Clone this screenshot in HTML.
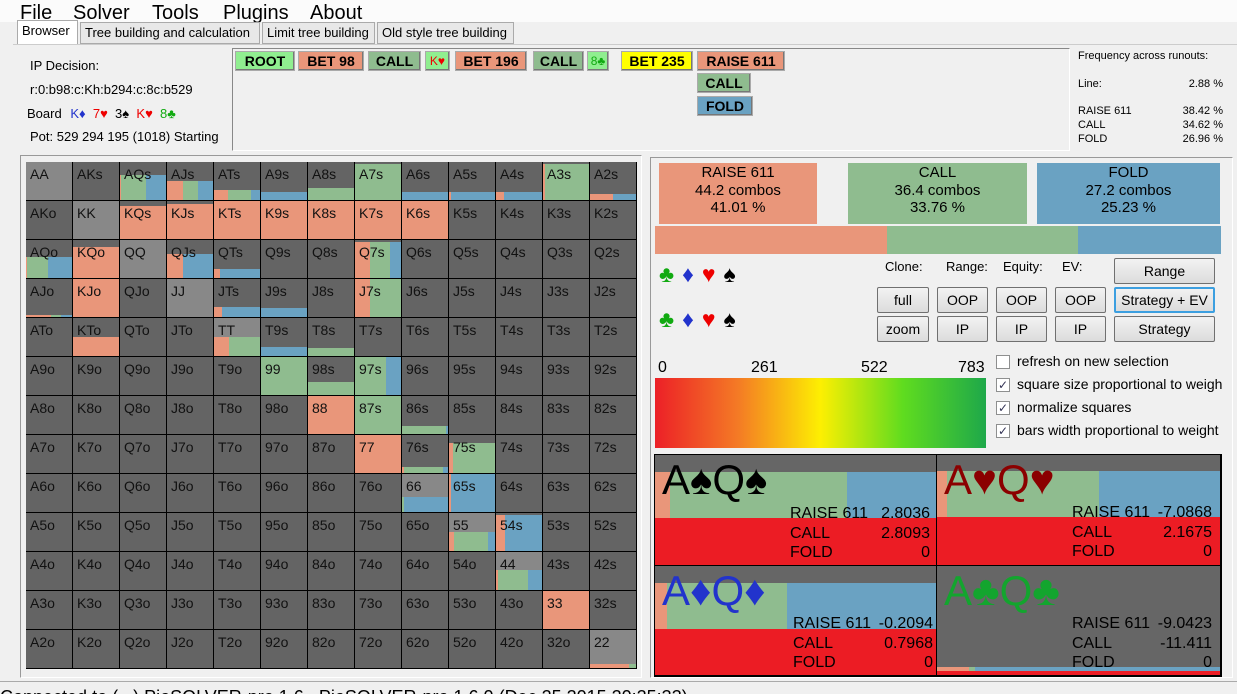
<!DOCTYPE html>
<html><head><meta charset="utf-8">
<style>
*{margin:0;padding:0;box-sizing:border-box}
body{width:1237px;height:694px;overflow:hidden;background:#f0f0f0;font-family:"Liberation Sans","DejaVu Sans",sans-serif;position:relative;color:#000}
.a{position:absolute}
.menu{left:0;top:0;width:1237px;height:22px;background:#fbfbfb}
.menu span{position:absolute;top:1px;font-size:20px;line-height:24px}
.tab{position:absolute;top:22px;height:22px;border:1px solid #aaa;background:#e8e8e8;font-size:13px;line-height:20px;padding:0 4px}
.tb{position:absolute;height:20px;border:1px solid #aaa;font-weight:bold;font-size:14px;line-height:18px;text-align:center;box-shadow:inset -1px -1px 0 #777}
.grid{left:26px;top:162px;width:611px;height:507px;background:#000;display:grid;grid-template-columns:repeat(13,46px);grid-template-rows:repeat(13,38px);gap:1px;padding:0 1px 1px 0}
.grid div{background:#646464;position:relative;font-size:14px;color:#111;padding:4px 0 0 4px;overflow:hidden}
.grid div.p{background:#888}
.grid i{position:absolute;left:0;right:0;bottom:0;display:flex}
.grid b{display:block;height:100%}
.grid span{position:relative;z-index:1}
.r{background:#e9967a}.g{background:#8fbc8f}.u{background:#6aa2c2}
.btn{position:absolute;height:26px;border:1px solid #707070;border-radius:2px;background:linear-gradient(#f2f2f2,#dcdcdc);font-size:14px;text-align:center;line-height:24px}
.cb{position:absolute;left:996px;width:14px;height:14px;border:1px solid #8e8f8f;background:#fff;font-size:12px;line-height:12px;color:#335;text-align:center}
.cl{position:absolute;left:1017px;font-size:14px;white-space:nowrap}
.q{position:absolute;overflow:hidden;background:#666}
.q .c{position:absolute;left:7px;font-size:42px;line-height:44px}
.q .t{position:absolute;font-size:16px;line-height:19.5px;width:140px}
.q .t div{display:flex;justify-content:space-between}
</style></head><body>
<div class="a menu"><span style="left:20px">File</span><span style="left:73px">Solver</span><span style="left:152px">Tools</span><span style="left:223px">Plugins</span><span style="left:310px">About</span></div>
<div class="tab" style="left:17px;top:20px;height:25px;width:61px;background:#fff;border-bottom:none">Browser</div>
<div class="tab" style="left:80px;width:180px">Tree building and calculation</div>
<div class="tab" style="left:262px;width:113px">Limit tree building</div>
<div class="tab" style="left:377px;width:137px">Old style tree building</div>
<div class="a" style="left:13px;top:44px;width:1224px;height:1px;background:#ccc"></div>

<div class="a" style="left:30px;top:58px;font-size:13px">IP Decision:</div>
<div class="a" style="left:30px;top:82px;font-size:13px">r:0:b98:c:Kh:b294:c:8c:b529</div>
<div class="a" style="left:27px;top:106px;font-size:13px">Board <span style="color:#2233cc;margin-left:5px">K♦</span> <span style="color:#e00">&nbsp;7♥</span> &nbsp;3♠ <span style="color:#e00">&nbsp;K♥</span> <span style="color:#1a1">&nbsp;8♣</span></div>
<div class="a" style="left:30px;top:129px;font-size:13px;white-space:nowrap;width:198px;overflow:hidden">Pot: 529 294 195 (1018) Starting</div>

<div class="a" style="left:232px;top:48px;width:838px;height:103px;border:1px solid #888;border-right-color:#fff;border-bottom-color:#fff;background:#f0f0f0"></div>
<div class="tb" style="left:235px;top:51px;width:60px;background:#90ee90">ROOT</div>
<div class="tb" style="left:298px;top:51px;width:66px;background:#e9967a">BET 98</div>
<div class="tb" style="left:368px;top:51px;width:53px;background:#8fbc8f">CALL</div>
<div class="tb" style="left:425px;top:51px;width:25px;background:#90ee90;font-weight:normal;font-size:12px;color:#e00">K♥</div>
<div class="tb" style="left:455px;top:51px;width:72px;background:#e9967a">BET 196</div>
<div class="tb" style="left:533px;top:51px;width:51px;background:#8fbc8f">CALL</div>
<div class="tb" style="left:587px;top:51px;width:22px;background:#90ee90;font-weight:normal;font-size:12px;color:#1a1">8♣</div>
<div class="tb" style="left:621px;top:51px;width:72px;background:#ffff00">BET 235</div>
<div class="tb" style="left:697px;top:51px;width:88px;background:#e9967a">RAISE 611</div>
<div class="tb" style="left:697px;top:73px;width:54px;background:#8fbc8f">CALL</div>
<div class="tb" style="left:697px;top:96px;width:56px;background:#6aa2c2">FOLD</div>

<div class="a" style="left:1078px;top:50px;font-size:11px">Frequency across runouts:</div>
<div class="a" style="left:1078px;top:78px;font-size:11px">Line:</div><div class="a" style="left:1160px;width:63px;text-align:right;top:78px;font-size:11px">2.88 %</div>
<div class="a" style="left:1078px;top:104px;font-size:11px;line-height:14px">RAISE 611<br>CALL<br>FOLD</div>
<div class="a" style="left:1160px;width:63px;text-align:right;top:104px;font-size:11px;line-height:14px">38.42 %<br>34.62 %<br>26.96 %</div>

<div class="a" style="left:20px;top:155px;width:622px;height:523px;border:1px solid #999;border-right-color:#fff;border-bottom-color:#fff"></div>
<div class="a grid">
<div class="p"><span>AA</span></div><div><span>AKs</span></div><div><span>AQs</span><i style="height:65%"><b class="r" style="flex:2"></b><b class="g" style="flex:55"></b><b class="u" style="flex:43"></b></i></div><div><span>AJs</span><i style="height:50%"><b class="r" style="flex:35"></b><b class="g" style="flex:33"></b><b class="u" style="flex:32"></b></i></div><div><span>ATs</span><i style="height:27%"><b class="r" style="flex:30"></b><b class="g" style="flex:50"></b><b class="u" style="flex:20"></b></i></div><div><span>A9s</span><i style="height:22%"><b class="u" style="flex:1"></b></i></div><div><span>A8s</span><i style="height:31%"><b class="g" style="flex:1"></b></i></div><div><span>A7s</span><i style="height:96%"><b class="g" style="flex:1"></b></i></div><div><span>A6s</span><i style="height:22%"><b class="u" style="flex:1"></b></i></div><div><span>A5s</span><i style="height:22%"><b class="r" style="flex:5"></b><b class="u" style="flex:95"></b></i></div><div><span>A4s</span><i style="height:22%"><b class="r" style="flex:17"></b><b class="u" style="flex:83"></b></i></div><div><span>A3s</span><i style="height:96%"><b class="r" style="flex:4"></b><b class="g" style="flex:96"></b></i></div><div><span>A2s</span><i style="height:17%"><b class="r" style="flex:50"></b><b class="u" style="flex:50"></b></i></div>
<div><span>AKo</span></div><div class="p"><span>KK</span></div><div><span>KQs</span><i style="height:87%"><b class="r" style="flex:1"></b></i></div><div><span>KJs</span><i style="height:92%"><b class="r" style="flex:1"></b></i></div><div><span>KTs</span><i style="height:100%"><b class="r" style="flex:1"></b></i></div><div><span>K9s</span><i style="height:100%"><b class="r" style="flex:1"></b></i></div><div><span>K8s</span><i style="height:100%"><b class="r" style="flex:1"></b></i></div><div><span>K7s</span><i style="height:100%"><b class="r" style="flex:1"></b></i></div><div><span>K6s</span><i style="height:100%"><b class="r" style="flex:1"></b></i></div><div><span>K5s</span></div><div><span>K4s</span></div><div><span>K3s</span></div><div><span>K2s</span></div>
<div><span>AQo</span><i style="height:54%"><b class="r" style="flex:3"></b><b class="g" style="flex:45"></b><b class="u" style="flex:52"></b></i></div><div><span>KQo</span><i style="height:81%"><b class="r" style="flex:1"></b></i></div><div class="p"><span>QQ</span></div><div><span>QJs</span><i style="height:63%"><b class="r" style="flex:35"></b><b class="u" style="flex:65"></b></i></div><div><span>QTs</span><i style="height:24%"><b class="r" style="flex:12"></b><b class="u" style="flex:88"></b></i></div><div><span>Q9s</span></div><div><span>Q8s</span></div><div><span>Q7s</span><i style="height:96%"><b class="r" style="flex:33"></b><b class="g" style="flex:42"></b><b class="u" style="flex:25"></b></i></div><div><span>Q6s</span></div><div><span>Q5s</span></div><div><span>Q4s</span></div><div><span>Q3s</span></div><div><span>Q2s</span></div>
<div><span>AJo</span><i style="height:5%"><b class="r" style="flex:55"></b><b class="g" style="flex:20"></b><b class="u" style="flex:25"></b></i></div><div><span>KJo</span><i style="height:100%"><b class="r" style="flex:1"></b></i></div><div><span>QJo</span></div><div class="p"><span>JJ</span></div><div><span>JTs</span><i style="height:26%"><b class="r" style="flex:17"></b><b class="u" style="flex:83"></b></i></div><div><span>J9s</span><i style="height:24%"><b class="u" style="flex:1"></b></i></div><div><span>J8s</span></div><div><span>J7s</span><i style="height:100%"><b class="r" style="flex:33"></b><b class="g" style="flex:67"></b></i></div><div><span>J6s</span></div><div><span>J5s</span></div><div><span>J4s</span></div><div><span>J3s</span></div><div><span>J2s</span></div>
<div><span>ATo</span></div><div><span>KTo</span><i style="height:51%"><b class="r" style="flex:1"></b></i></div><div><span>QTo</span></div><div><span>JTo</span></div><div class="p"><span>TT</span><i style="height:51%"><b class="r" style="flex:33"></b><b class="g" style="flex:67"></b></i></div><div><span>T9s</span><i style="height:24%"><b class="u" style="flex:1"></b></i></div><div><span>T8s</span><i style="height:22%"><b class="g" style="flex:1"></b></i></div><div><span>T7s</span></div><div><span>T6s</span></div><div><span>T5s</span></div><div><span>T4s</span></div><div><span>T3s</span></div><div><span>T2s</span></div>
<div><span>A9o</span></div><div><span>K9o</span></div><div><span>Q9o</span></div><div><span>J9o</span></div><div><span>T9o</span></div><div><span>99</span><i style="height:100%"><b class="g" style="flex:1"></b></i></div><div><span>98s</span><i style="height:33%"><b class="g" style="flex:1"></b></i></div><div><span>97s</span><i style="height:100%"><b class="g" style="flex:68"></b><b class="u" style="flex:32"></b></i></div><div><span>96s</span></div><div><span>95s</span></div><div><span>94s</span></div><div><span>93s</span></div><div><span>92s</span></div>
<div><span>A8o</span></div><div><span>K8o</span></div><div><span>Q8o</span></div><div><span>J8o</span></div><div><span>T8o</span></div><div><span>98o</span></div><div><span>88</span><i style="height:100%"><b class="r" style="flex:1"></b></i></div><div><span>87s</span><i style="height:100%"><b class="g" style="flex:1"></b></i></div><div><span>86s</span><i style="height:21%"><b class="g" style="flex:96"></b><b class="u" style="flex:4"></b></i></div><div><span>85s</span></div><div><span>84s</span></div><div><span>83s</span></div><div><span>82s</span></div>
<div><span>A7o</span></div><div><span>K7o</span></div><div><span>Q7o</span></div><div><span>J7o</span></div><div><span>T7o</span></div><div><span>97o</span></div><div><span>87o</span></div><div><span>77</span><i style="height:100%"><b class="r" style="flex:1"></b></i></div><div><span>76s</span><i style="height:16%"><b class="r" style="flex:4"></b><b class="g" style="flex:86"></b><b class="u" style="flex:10"></b></i></div><div><span>75s</span><i style="height:80%"><b class="r" style="flex:8"></b><b class="g" style="flex:92"></b></i></div><div><span>74s</span></div><div><span>73s</span></div><div><span>72s</span></div>
<div><span>A6o</span></div><div><span>K6o</span></div><div><span>Q6o</span></div><div><span>J6o</span></div><div><span>T6o</span></div><div><span>96o</span></div><div><span>86o</span></div><div><span>76o</span></div><div class="p"><span>66</span><i style="height:40%"><b class="g" style="flex:5"></b><b class="u" style="flex:95"></b></i></div><div><span>65s</span><i style="height:100%"><b class="r" style="flex:5"></b><b class="u" style="flex:95"></b></i></div><div><span>64s</span></div><div><span>63s</span></div><div><span>62s</span></div>
<div><span>A5o</span></div><div><span>K5o</span></div><div><span>Q5o</span></div><div><span>J5o</span></div><div><span>T5o</span></div><div><span>95o</span></div><div><span>85o</span></div><div><span>75o</span></div><div><span>65o</span></div><div class="p"><span>55</span><i style="height:50%"><b class="r" style="flex:10"></b><b class="g" style="flex:75"></b><b class="u" style="flex:15"></b></i></div><div><span>54s</span><i style="height:96%"><b class="r" style="flex:20"></b><b class="u" style="flex:80"></b></i></div><div><span>53s</span></div><div><span>52s</span></div>
<div><span>A4o</span></div><div><span>K4o</span></div><div><span>Q4o</span></div><div><span>J4o</span></div><div><span>T4o</span></div><div><span>94o</span></div><div><span>84o</span></div><div><span>74o</span></div><div><span>64o</span></div><div><span>54o</span></div><div class="p"><span>44</span><i style="height:52%"><b class="r" style="flex:5"></b><b class="g" style="flex:65"></b><b class="u" style="flex:30"></b></i></div><div><span>43s</span></div><div><span>42s</span></div>
<div><span>A3o</span></div><div><span>K3o</span></div><div><span>Q3o</span></div><div><span>J3o</span></div><div><span>T3o</span></div><div><span>93o</span></div><div><span>83o</span></div><div><span>73o</span></div><div><span>63o</span></div><div><span>53o</span></div><div><span>43o</span></div><div><span>33</span><i style="height:100%"><b class="r" style="flex:1"></b></i></div><div><span>32s</span></div>
<div><span>A2o</span></div><div><span>K2o</span></div><div><span>Q2o</span></div><div><span>J2o</span></div><div><span>T2o</span></div><div><span>92o</span></div><div><span>82o</span></div><div><span>72o</span></div><div><span>62o</span></div><div><span>52o</span></div><div><span>42o</span></div><div><span>32o</span></div><div class="p"><span>22</span><i style="height:10%"><b class="r" style="flex:85"></b><b class="g" style="flex:15"></b></i></div>
</div>

<div class="a" style="left:650px;top:157px;width:583px;height:521px;border:1px solid #999;border-right-color:#fff;border-bottom-color:#fff"></div>
<div class="a r" style="left:659px;top:163px;width:158px;height:61px;text-align:center;font-size:15px;line-height:17.5px;padding-top:1px">RAISE 611<br>44.2 combos<br>41.01 %</div>
<div class="a g" style="left:848px;top:163px;width:179px;height:61px;text-align:center;font-size:15px;line-height:17.5px;padding-top:1px">CALL<br>36.4 combos<br>33.76 %</div>
<div class="a u" style="left:1037px;top:163px;width:183px;height:61px;text-align:center;font-size:15px;line-height:17.5px;padding-top:1px">FOLD<br>27.2 combos<br>25.23 %</div>
<div class="a r" style="left:655px;top:226px;width:232px;height:28px"></div>
<div class="a g" style="left:887px;top:226px;width:191px;height:28px"></div>
<div class="a u" style="left:1078px;top:226px;width:143px;height:28px"></div>

<div class="a" style="left:659px;top:261px;font-size:23px;letter-spacing:8px;white-space:nowrap"><span style="color:#1a1">♣</span><span style="color:#2233cc">♦</span><span style="color:#e00">♥</span><span>♠</span></div>
<div class="a" style="left:659px;top:306px;font-size:23px;letter-spacing:8px;white-space:nowrap"><span style="color:#1a1">♣</span><span style="color:#2233cc">♦</span><span style="color:#e00">♥</span><span>♠</span></div>

<div class="a" style="left:885px;top:259px;font-size:13px">Clone:</div>
<div class="a" style="left:946px;top:259px;font-size:13px">Range:</div>
<div class="a" style="left:1003px;top:259px;font-size:13px">Equity:</div>
<div class="a" style="left:1062px;top:259px;font-size:13px">EV:</div>
<div class="btn" style="left:1114px;top:258px;width:101px">Range</div>
<div class="btn" style="left:877px;top:287px;width:52px">full</div>
<div class="btn" style="left:937px;top:287px;width:51px">OOP</div>
<div class="btn" style="left:996px;top:287px;width:51px">OOP</div>
<div class="btn" style="left:1055px;top:287px;width:51px">OOP</div>
<div class="btn" style="left:1114px;top:287px;width:101px;border:2px solid #3c9fe0;line-height:22px">Strategy + EV</div>
<div class="btn" style="left:877px;top:316px;width:52px">zoom</div>
<div class="btn" style="left:937px;top:316px;width:51px">IP</div>
<div class="btn" style="left:996px;top:316px;width:51px">IP</div>
<div class="btn" style="left:1055px;top:316px;width:51px">IP</div>
<div class="btn" style="left:1114px;top:316px;width:101px">Strategy</div>

<div class="a" style="left:658px;top:359px;font-size:16px">0</div>
<div class="a" style="left:751px;top:359px;font-size:16px">261</div>
<div class="a" style="left:861px;top:359px;font-size:16px">522</div>
<div class="a" style="left:958px;top:359px;font-size:16px">783</div>
<div class="a" style="left:655px;top:378px;width:331px;height:70px;background:linear-gradient(90deg,#ec2027 0%,#f47a25 25%,#fdef02 50%,#5fdc1f 75%,#1ea84a 100%)"></div>

<div class="cb" style="top:355px"></div><div class="cl" style="top:353px">refresh on new selection</div>
<div class="cb" style="top:378px">✓</div><div class="cl" style="top:376px;width:205px;overflow:hidden">square size proportional to weight</div>
<div class="cb" style="top:401px">✓</div><div class="cl" style="top:399px">normalize squares</div>
<div class="cb" style="top:424px">✓</div><div class="cl" style="top:422px">bars width proportional to weight</div>

<div class="a" style="left:654px;top:454px;width:568px;height:223px;background:#000"></div>
<div class="q" style="left:655px;top:455px;width:281px;height:110px">
 <div class="a r" style="left:0;top:17px;width:15px;height:46px"></div><div class="a g" style="left:15px;top:17px;width:177px;height:46px"></div><div class="a u" style="left:192px;top:17px;width:89px;height:46px"></div>
 <div class="a" style="left:0;top:63px;width:281px;height:47px;background:#ec1c24"></div>
 <div class="c" style="top:3px;color:#000">A♠Q♠</div>
 <div class="t" style="left:135px;top:49px"><div><span>RAISE 611</span><span>2.8036</span></div><div><span>CALL</span><span>2.8093</span></div><div><span>FOLD</span><span>0</span></div></div>
</div>
<div class="q" style="left:937px;top:455px;width:283px;height:110px">
 <div class="a r" style="left:0;top:16px;width:10px;height:46px"></div><div class="a g" style="left:10px;top:16px;width:152px;height:46px"></div><div class="a u" style="left:162px;top:16px;width:121px;height:46px"></div>
 <div class="a" style="left:0;top:62px;width:283px;height:48px;background:#ec1c24"></div>
 <div class="c" style="top:3px;color:#8b0000">A♥Q♥</div>
 <div class="t" style="left:135px;top:48px"><div><span>RAISE 611</span><span>-7.0868</span></div><div><span>CALL</span><span>2.1675</span></div><div><span>FOLD</span><span>0</span></div></div>
</div>
<div class="q" style="left:655px;top:566px;width:281px;height:109px">
 <div class="a r" style="left:0;top:17px;width:12px;height:46px"></div><div class="a g" style="left:12px;top:17px;width:120px;height:46px"></div><div class="a u" style="left:132px;top:17px;width:149px;height:46px"></div>
 <div class="a" style="left:0;top:63px;width:281px;height:46px;background:#ec1c24"></div>
 <div class="c" style="top:3px;color:#2233cc">A♦Q♦</div>
 <div class="t" style="left:138px;top:48px"><div><span>RAISE 611</span><span>-0.2094</span></div><div><span>CALL</span><span>0.7968</span></div><div><span>FOLD</span><span>0</span></div></div>
</div>
<div class="q" style="left:937px;top:566px;width:283px;height:109px">
 <div class="a r" style="left:0;top:101px;width:32px;height:4px"></div><div class="a g" style="left:32px;top:101px;width:6px;height:4px"></div><div class="a u" style="left:38px;top:101px;width:245px;height:4px"></div>
 <div class="a" style="left:0;top:105px;width:283px;height:4px;background:#ec1c24"></div>
 <div class="c" style="top:3px;color:#13a52e">A♣Q♣</div>
 <div class="t" style="left:135px;top:48px"><div><span>RAISE 611</span><span>-9.0423</span></div><div><span>CALL</span><span>-11.411</span></div><div><span>FOLD</span><span>0</span></div></div>
</div>

<div class="a" style="left:0;top:681px;width:1237px;height:1px;background:#aaa"></div>
<div class="a" style="left:0;top:682px;width:1237px;height:12px;background:#f0f0f0;overflow:hidden"><div style="font-size:18px;line-height:20px;margin-top:5px;white-space:nowrap">Connected to (...) PioSOLVER-pro 1.6 &nbsp;&nbsp;PioSOLVER-pro 1.6.0 (Dec 25 2015 20:25:33)</div></div>
</body></html>
